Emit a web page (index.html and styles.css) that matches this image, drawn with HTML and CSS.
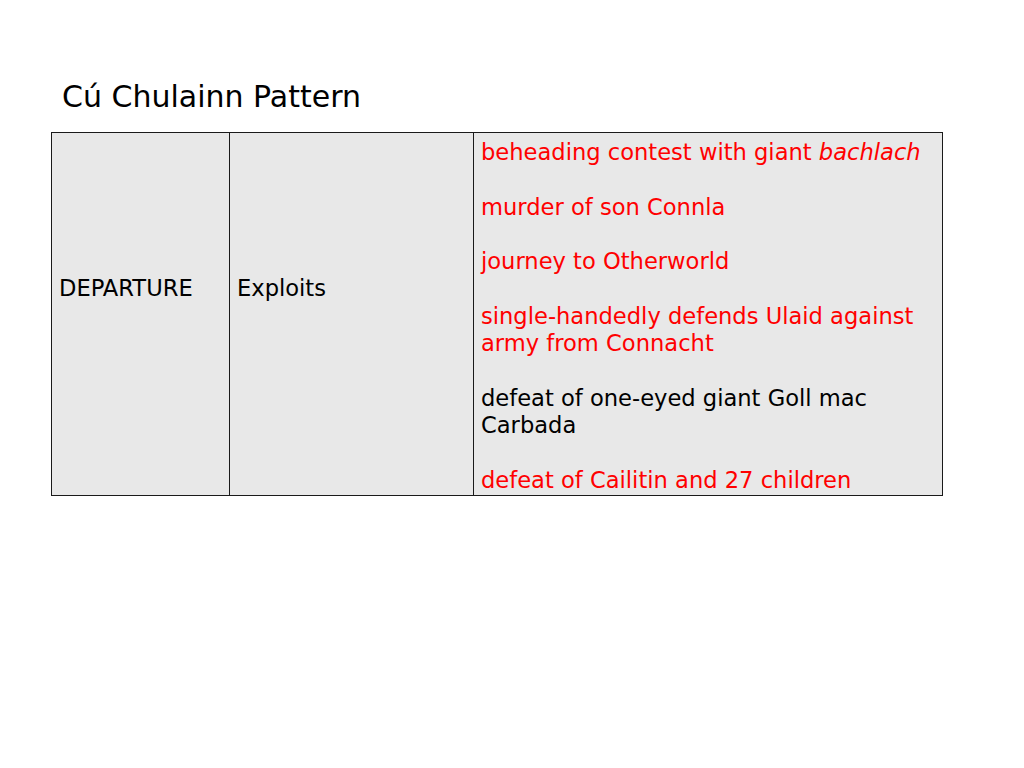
FILE: index.html
```html
<!DOCTYPE html>
<html>
<head>
<meta charset="utf-8">
<link rel="stylesheet" href="styles.css">
</head>
<body>
<h1 class="title">Cú Chulainn Pattern</h1>
<table class="pattern">
  <tr>
    <td class="c1">DEPARTURE</td>
    <td class="c2">Exploits</td>
    <td class="c3">
      <p class="red">beheading contest with giant <em>bachlach</em></p>
      <p class="red">murder of son Connla</p>
      <p class="red">journey to Otherworld</p>
      <p class="red">single-handedly defends Ulaid against army from Connacht</p>
      <p>defeat of one-eyed giant Goll mac Carbada</p>
      <p class="red last">defeat of Cailitin and 27 children</p>
    </td>
  </tr>
</table>
</body>
</html>
```

FILE: styles.css
```css
html, body {
  margin: 0;
  padding: 0;
  background: #ffffff;
}
body {
  font-family: "DejaVu Sans", Verdana, sans-serif;
  color: #000;
  padding: 79px 0 0 51px;
}
.title {
  font-size: 30px;
  font-weight: normal;
  margin: 0 0 0 11px;
  line-height: 36px;
  height: 53px;
}
.pattern {
  border-collapse: collapse;
  width: 892px;
  font-size: 22.6px;
  line-height: 27.33px;
}
.pattern td {
  border: 1px solid #1a1a1a;
  background: #e8e8e8;
  padding: 6px 7px 1px 7px;
}
.c1 {
  width: 163px;
  vertical-align: middle;
  padding-bottom: 57px !important;
}
.c2 {
  width: 229px;
  vertical-align: middle;
  padding-bottom: 57px !important;
}
.c3 {
  vertical-align: top;
}
.c3 p {
  margin: 0 0 27.33px 0;
}
.c3 p.last {
  margin-bottom: 0;
}
.red {
  color: #ff0000;
}
em {
  font-style: italic;
}
```
